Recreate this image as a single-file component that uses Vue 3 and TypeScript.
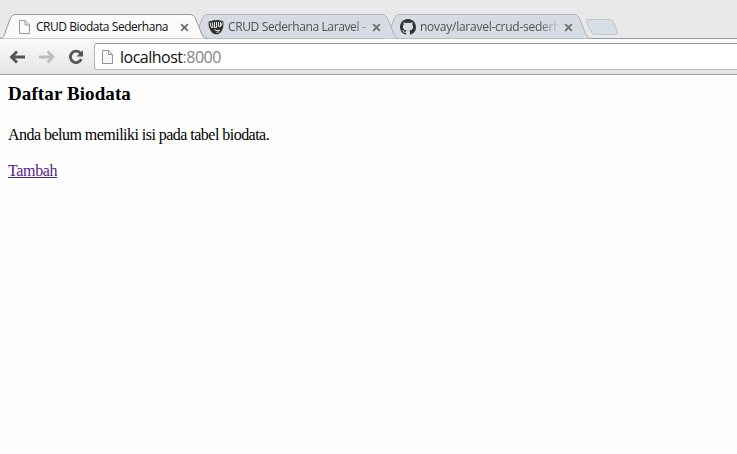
<script setup lang="ts">
interface Tab {
  title: string
  icon: 'page' | 'fist' | 'github'
  active: boolean
}

const tabs: Tab[] = [
  { title: 'CRUD Biodata Sederhana', icon: 'page', active: true },
  { title: 'CRUD Sederhana Laravel –', icon: 'fist', active: false },
  { title: 'novay/laravel-crud-sederh', icon: 'github', active: false },
]
</script>

<template>
  <div class="browser">
    <header class="strip">
      <div
        v-for="(tab, i) in tabs"
        :key="tab.title"
        class="tab"
        :class="['tab-' + (i + 1), { active: tab.active }]"
      >
        <svg class="shape" width="208" height="25" viewBox="0 0 208 25">
          <path d="M0 24.5C3 24.3 3.5 23 4.5 20.5L10 5Q11.7 .5 15 .5H190Q193.500 .5 195.300 4L202 20.500Q203.500 24.500 207 24.500" />
        </svg>
        <svg v-if="tab.icon === 'page'" class="icon" width="16" height="16" viewBox="0 0 16 16">
          <path d="M3.500 1.500H9L13.500 6V14.500H3.500Z M9 1.500V6H13.500" fill="#fafafa" stroke="#999" />
        </svg>
        <svg v-else-if="tab.icon === 'fist'" class="icon" width="16" height="16" viewBox="0 0 16 16">
          <path d="M.4 3.200Q1 1.500 4 2L5 1.200Q7 .5 8 1.500Q10 .2 11.500 1.500L14 1.700Q15.700 2 15.600 4Q15.700 9 13.500 12.500Q11.500 15.400 8 15.300Q4.500 15 2.500 11.500Q.3 8 .4 3.200Z" fill="#303030" />
          <path d="M2 3.500L3 8L5 8.500L4.300 3.500 M6.500 3V8.500H8.500V3 M10.500 3V7.500H12.500V3 M14.200 3.500L13.500 7 M6.500 10.500L8 11.500H12 M8.500 13.300L11 12.800" fill="none" stroke="#e4e6ea" stroke-width="1" />
        </svg>
        <svg v-else class="icon" width="16" height="16" viewBox="0 0 16 16">
          <path fill="#333" d="M8 0C3.580 0 0 3.580 0 8c0 3.540 2.290 6.530 5.470 7.590.4.070.55-.17.55-.38 0-.19-.01-.82-.01-1.490-2.010.37-2.530-.49-2.690-.94-.09-.23-.48-.94-.82-1.130-.28-.15-.68-.52-.01-.53.63-.01 1.080.58 1.230.82.72 1.210 1.870.87 2.330.66.070-.52.28-.87.51-1.070-1.780-.2-3.640-.89-3.640-3.950 0-.87.31-1.590.82-2.150-.08-.2-.36-1.020.08-2.120 0 0 .67-.21 2.200.82.64-.18 1.320-.27 2-.27s1.360.09 2 .27c1.530-1.040 2.200-.82 2.200-.82.44 1.100.16 1.920.08 2.120.51.56.82 1.270.82 2.150 0 3.070-1.870 3.750-3.650 3.950.29.25.54.73.54 1.480 0 1.070-.01 1.930-.01 2.200 0 .21.15.46.55.38A8.010 8.010 0 0 0 16 8c0-4.420-3.580-8-8-8z" />
        </svg>
        <span class="title">{{ tab.title }}</span>
        <svg class="close" width="9" height="9" viewBox="0 0 9 9">
          <path d="M1.200 1.200L7.800 7.800M7.800 1.200L1.200 7.800" />
        </svg>
      </div>
      <svg class="new-tab" width="34" height="18" viewBox="0 0 34 18">
        <path d="M3.500 1.500H25Q27.500 1.500 28.500 4L32.300 13.500Q33 16.500 30.500 16.500H10Q7.500 16.500 6.300 14L1.700 4.500Q.5 1.500 3.500 1.500Z" fill="#d7dde5" stroke="#c3c5c8" />
      </svg>
    </header>

    <nav class="toolbar">
      <svg class="nav back" width="18" height="16" viewBox="0 0 18 16">
        <path d="M8 2.500L2.500 8L8 13.500M3 8H16" />
      </svg>
      <svg class="nav forward" width="18" height="16" viewBox="0 0 18 16">
        <path d="M9.500 2.500L15 8L9.500 13.500M14.500 8H1" />
      </svg>
      <svg class="nav reload" width="16" height="16" viewBox="0 0 16 16">
        <path d="M12.600 4.300A5.700 5.700 0 1 0 13.300 10.200" />
        <path class="head" d="M15 1V7.500H8.500Z" />
      </svg>
      <div class="omnibox">
        <svg width="14" height="16" viewBox="0 0 14 16">
          <path d="M1.500 1.500H7.500L11.500 5.500V14.500H1.500Z M7.500 1.500V5.500H11.500" fill="#f5f5f5" stroke="#929292" />
        </svg>
        <span class="url">localhost<span class="port">:8000</span></span>
      </div>
    </nav>

    <main class="page">
      <h3>Daftar Biodata</h3>
      <p>Anda belum memiliki isi pada tabel biodata.</p>
      <a href="#">Tambah</a>
    </main>
  </div>
</template>

<style>
body {
  overflow: hidden;
  background: #fefefe;
}
</style>

<style scoped>
.browser {
  width: 737px;
  height: 454px;
  overflow: hidden;
  display: flex;
  flex-direction: column;
  background: #fefefe;
}
.strip {
  height: 39px;
  flex: none;
  box-sizing: border-box;
  padding-top: 14px;
  display: flex;
  align-items: flex-start;
  background-color: #e8e8e8;
  background-image: radial-gradient(circle, #ededed 0.5px, transparent 1px);
  background-size: 4px 6px;
  box-shadow: inset 0 -1px #999;
}
.tab {
  position: relative;
  width: 208px;
  height: 25px;
  flex: none;
  box-sizing: border-box;
  padding-left: 16px;
  display: flex;
  align-items: center;
  margin-right: -16px;
  color: #505050;
}
.tab-1 { z-index: 3; }
.tab-2 { z-index: 2; }
.tab-3 { z-index: 1; }
.shape {
  position: absolute;
  left: 0;
  top: 0;
  z-index: -1;
}
.shape path {
  fill: #d7dce4;
  stroke: #b0b2b5;
}
.active .shape path {
  fill: #fafafa;
  stroke: #999;
}
.active {
  color: #111;
}
.icon {
  flex: none;
  margin-top: 1px;
}
.title {
  width: 138px;
  margin-left: 4px;
  white-space: nowrap;
  font: 12px/18px "Open Sans", "Noto Sans", sans-serif;
  letter-spacing: -0.450px;
  padding-top: 1px;
}
.tab-2 .title {
  letter-spacing: -0.370px;
  -webkit-mask-image: linear-gradient(to right, #000 126px, transparent 148px);
  mask-image: linear-gradient(to right, #000 126px, transparent 148px);
}
.tab-3 .title {
  letter-spacing: -0.250px;
  -webkit-mask-image: linear-gradient(to right, #000 118px, transparent 142px);
  mask-image: linear-gradient(to right, #000 118px, transparent 142px);
}
.close {
  flex: none;
  margin-left: 6px;
  margin-top: 1px;
}
.close path {
  stroke: #707070;
  stroke-width: 1.900;
}
.new-tab {
  margin: 4px 0 0 9px;
}
.toolbar {
  height: 36px;
  flex: none;
  box-sizing: border-box;
  padding: 4px 0 4px 9px;
  display: flex;
  align-items: center;
  background: linear-gradient(#fafafa, #e5e5e5);
  border-bottom: 1px solid #a0a0a0;
}
.nav {
  flex: none;
  fill: none;
  stroke: #555;
  stroke-width: 2.800;
}
.forward {
  margin-left: 11px;
  stroke: #bdbdbd;
}
.reload {
  margin-left: 12px;
}
.reload .head {
  fill: #555;
  stroke: none;
}
.omnibox {
  flex: 1;
  height: 27px;
  box-sizing: border-box;
  margin-left: 10px;
  padding-left: 6px;
  display: flex;
  align-items: center;
  background: #fff;
  border: 1px solid #b5b5b5;
  border-top-color: #999;
  border-right: 0;
  border-radius: 3px 0 0 3px;
}
.url {
  margin-left: 5px;
  font: 16px/22px "Open Sans", "Noto Sans", sans-serif;
  letter-spacing: -0.500px;
  color: #111;
}
.port {
  color: #858585;
}
.page {
  padding: 8px;
  font: 16px/18px "Liberation Serif", "Times New Roman", serif;
  color: #000;
}
h3 {
  margin: 0 0 22px;
  font-size: 19px;
  line-height: 21px;
  letter-spacing: 0.100px;
}
p {
  margin: 0 0 18px;
  letter-spacing: -0.530px;
}
a {
  color: #551a8b;
  letter-spacing: -0.350px;
}
</style>
